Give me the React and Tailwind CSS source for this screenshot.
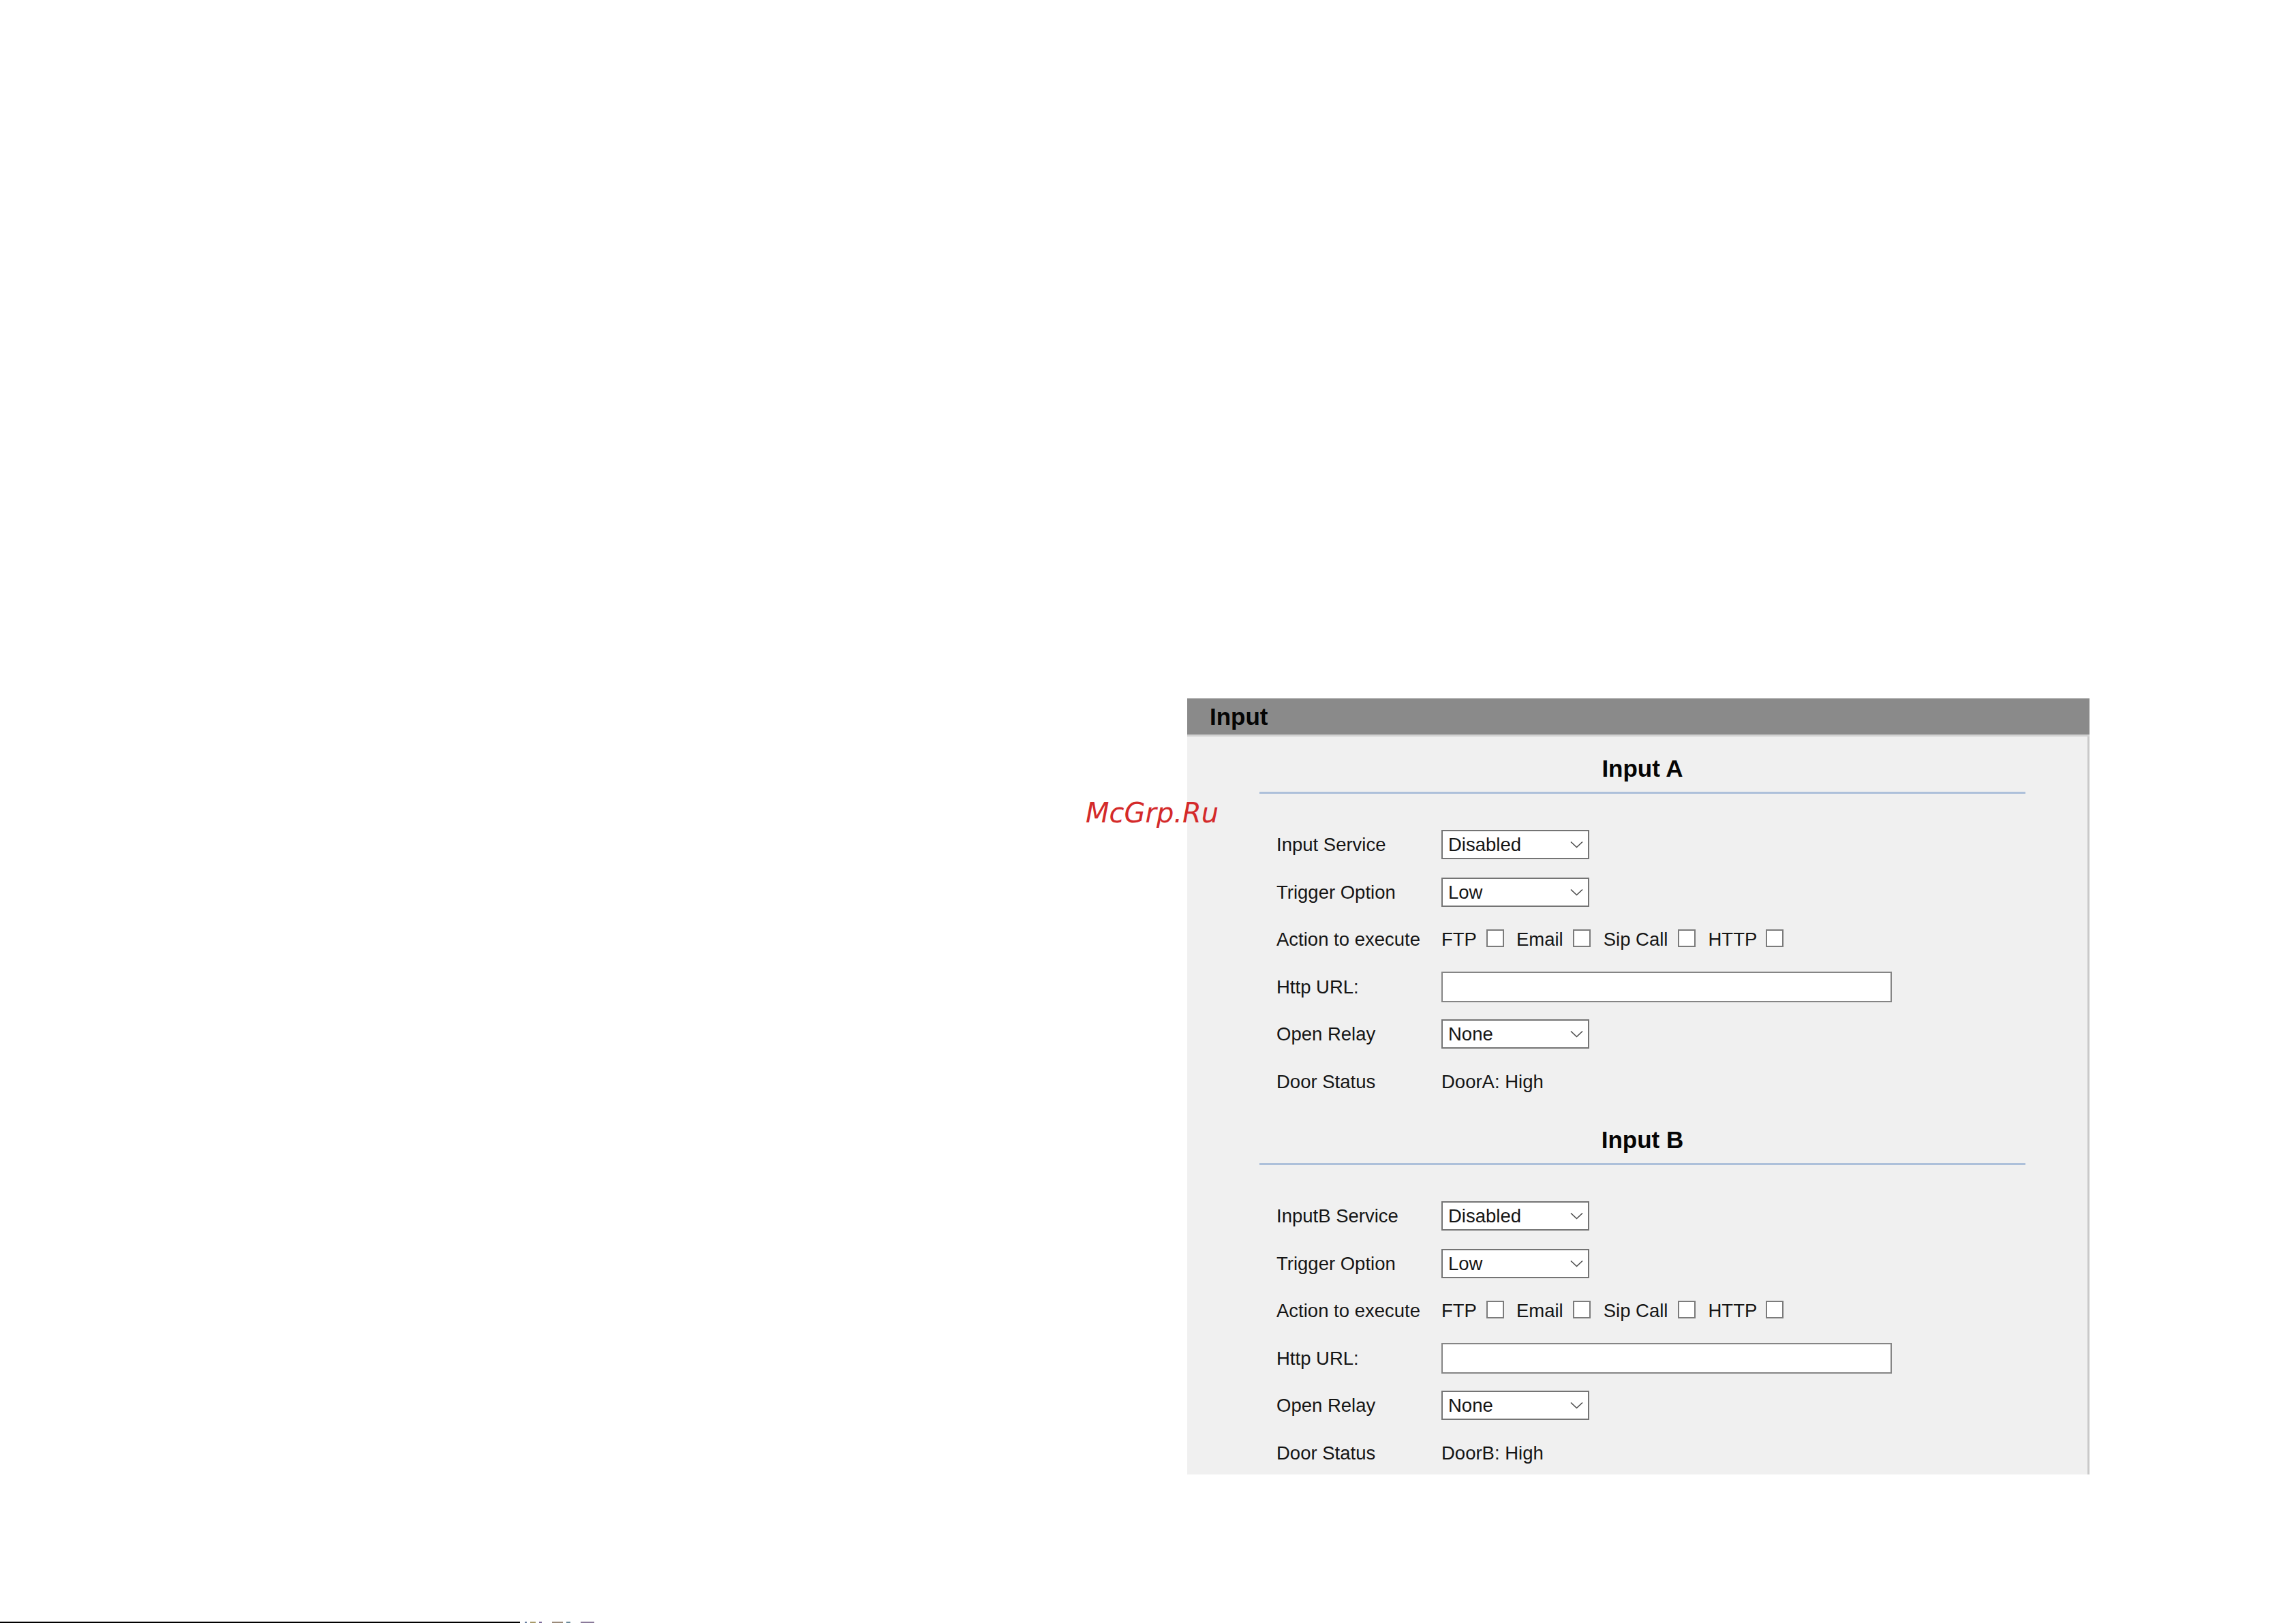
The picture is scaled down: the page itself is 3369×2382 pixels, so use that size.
import React from 'react';

const font = { fontFamily: '"Liberation Sans", Arial, sans-serif' };

const Chevron = () => (
  <svg width="19" height="11" viewBox="0 0 19 11" fill="none" className="shrink-0">
    <path d="M1 1.5 L9.5 9.5 L18 1.5" stroke="#4a4a4a" strokeWidth="1.6" />
  </svg>
);

const Select = ({ value }) => (
  <div className="w-[217px] h-[43px] border-2 border-[#747474] bg-white flex items-center justify-between pl-[8px] pr-[7px]">
    <span>{value}</span>
    <Chevron />
  </div>
);

const Check = () => (
  <span className="block w-[26px] h-[26px] border-2 border-[#7b7b7b] bg-white -mt-[3px]" />
);

const Row = ({ label, children }) => (
  <div className="flex items-center h-[69.5px]">
    <div className="w-[242px] shrink-0">{label}</div>
    {children}
  </div>
);

const Section = ({ title, first, service, door }) => (
  <div className={first ? 'pt-[27px]' : 'pt-[31px]'}>
    <div className="ml-[106px] w-[1124px]">
      <div className="h-[40px] leading-[40px] text-center font-bold text-[35px] text-[#050505]">
        {title}
      </div>
      <div className="mt-[14px] h-[3px] bg-[#adc0da]" />
    </div>
    <div className="mt-[40px] pl-[131px] text-[27.5px] text-[#151515]">
      <Row label={service}>
        <Select value="Disabled" />
      </Row>
      <Row label="Trigger Option">
        <Select value="Low" />
      </Row>
      <Row label="Action to execute">
        <div className="flex items-center">
          <span>FTP</span>
          <span className="ml-[14px]"><Check /></span>
          <span className="ml-[18px]">Email</span>
          <span className="ml-[14px]"><Check /></span>
          <span className="ml-[19px]">Sip Call</span>
          <span className="ml-[15px]"><Check /></span>
          <span className="ml-[18px]">HTTP</span>
          <span className="ml-[13px]"><Check /></span>
        </div>
      </Row>
      <Row label="Http URL:">
        <div className="w-[661px] h-[45px] border-2 border-[#858585] bg-white" />
      </Row>
      <Row label="Open Relay">
        <Select value="None" />
      </Row>
      <Row label="Door Status">
        <span>{door}</span>
      </Row>
    </div>
  </div>
);

export default function App() {
  return (
    <div className="relative w-[3369px] h-[2382px] bg-white overflow-hidden" style={font}>
      <div className="pt-[1025px] pl-[1742px]">
        <div className="w-[1324px]">
          {/* header bar */}
          <div className="h-[53px] bg-[#8a8a8a] flex items-center pl-[33px]">
            <span className="font-bold text-[35px] leading-[40px] text-[#050505]">Input</span>
          </div>
          <div className="h-[3px] bg-[#d2d2d2]" />

          {/* body */}
          <div className="h-[1083px] bg-[#f0f0f0] border-r-[3px] border-[#c9c9c9] overflow-hidden">
            <Section title="Input A" first service="Input Service" door="DoorA: High" />
            <Section title="Input B" service="InputB Service" door="DoorB: High" />
          </div>
        </div>
      </div>

      {/* bottom rule */}
      <div className="mt-[216px] flex items-center">
        <div className="w-[763px] h-[3px] bg-black" />
        <div className="ml-[7px] flex items-center gap-[5px]">
          <span className="w-[3px] h-[3px] bg-[#6a7fa0]" />
          <span className="w-[8px] h-[3px] bg-[#a89a6a]" />
          <span className="w-[4px] h-[3px] bg-[#7d6a9a]" />
          <span className="ml-[10px] w-[16px] h-[3px] bg-[#9a8a7a]" />
          <span className="w-[6px] h-[3px] bg-[#6a8a9a]" />
          <span className="ml-[10px] w-[20px] h-[3px] bg-[#8a7a9a]" />
        </div>
      </div>

      {/* watermark */}
      <div
        className="absolute left-[1593px] top-[1173px] text-[40px] leading-[40px] italic text-[#d42a2a]"
        style={{ fontFamily: '"DejaVu Sans", sans-serif' }}
      >
        McGrp.Ru
      </div>
    </div>
  );
}
